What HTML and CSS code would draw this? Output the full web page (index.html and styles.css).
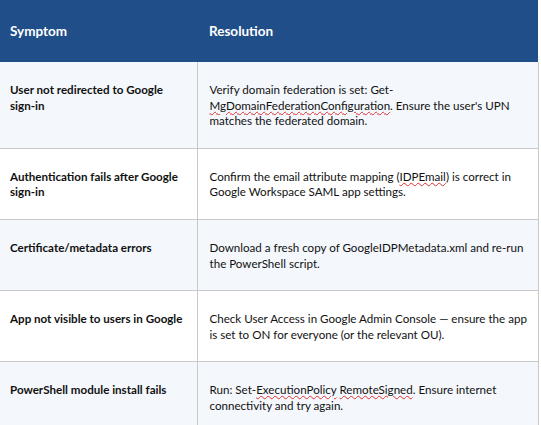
FILE: index.html
```html
<!DOCTYPE html>
<html>
<head>
<meta charset="utf-8">
<link rel="stylesheet" href="styles.css">
</head>
<body>
<table class="tbl">
  <colgroup>
    <col class="col1">
    <col class="col2">
  </colgroup>
  <thead>
    <tr class="head">
      <th class="c1">Symptom</th>
      <th class="c2">Resolution</th>
    </tr>
  </thead>
  <tbody>
    <tr class="alt">
      <td class="c1 sym">User not redirected to Google sign-in</td>
      <td class="c2">Verify domain federation is set: Get-<span class="sp">MgDomainFederationConfiguration</span>. Ensure the user's UPN matches the federated domain.</td>
    </tr>
    <tr>
      <td class="c1 sym">Authentication fails after Google sign-in</td>
      <td class="c2">Confirm the email attribute mapping (<span class="sp">IDPEmail</span>) is correct in Google Workspace SAML app settings.</td>
    </tr>
    <tr class="alt">
      <td class="c1 sym">Certificate/metadata errors</td>
      <td class="c2">Download a fresh copy of GoogleIDPMetadata.xml and re-run the PowerShell script.</td>
    </tr>
    <tr>
      <td class="c1 sym">App not visible to users in Google</td>
      <td class="c2">Check User Access in Google Admin Console — ensure the app is set to ON for everyone (or the relevant OU).</td>
    </tr>
    <tr class="alt">
      <td class="c1 sym">PowerShell module install fails</td>
      <td class="c2">Run: Set-<span class="sp">ExecutionPolicy</span> <span class="sp">RemoteSigned</span>. Ensure internet connectivity and try again.</td>
    </tr>
  </tbody>
</table>
</body>
</html>
```

FILE: styles.css
```css
html, body {
  margin: 0;
  padding: 0;
  background: #ffffff;
}
body {
  font-family: Lato, "Liberation Sans", sans-serif;
  font-size: 11.6px;
  color: #111111;
}
.tbl {
  border-collapse: collapse;
  width: 538px;
  table-layout: fixed;
}
.col1 {
  width: 197px;
}
.col2 {
  width: 341px;
}
.tbl th, .tbl td {
  box-sizing: border-box;
  text-align: left;
  vertical-align: top;
  padding: 0;
}
.head {
  background: #1f4e89;
  color: #ffffff;
}
.head th {
  font-size: 13.5px;
  font-weight: bold;
  height: 62px;
  vertical-align: middle;
  line-height: 16px;
}
.tbl .c1 {
  padding-left: 10px;
  padding-right: 6px;
}
.tbl .c2 {
  padding-left: 12px;
  padding-right: 8px;
}
.tbl tbody td {
  line-height: 15.6px;
  padding-top: 20px;
  padding-bottom: 19px;
  border-bottom: 1px solid #c9c9c9;
  border-right: 1px solid #c9c9c9;
}
.sym {
  font-weight: bold;
}
.alt {
  background: #f4f7fc;
}
.sp {
  text-decoration: underline wavy #e03030;
  text-decoration-thickness: 1px;
  text-underline-offset: 1px;
}
```
